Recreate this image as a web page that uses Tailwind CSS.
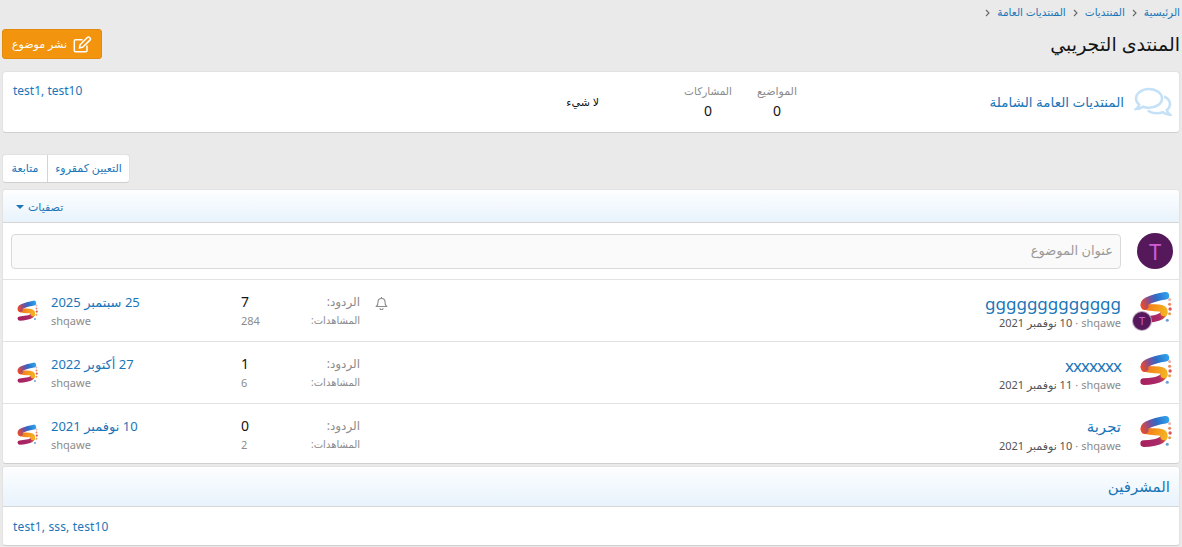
<!DOCTYPE html>
<html lang="ar" dir="rtl">
<head>
<meta charset="utf-8">
<script src="https://cdn.jsdelivr.net/npm/@tailwindcss/browser@4"></script>
</head>
<body class="bg-[#eaeaea] font-['Noto_Sans','DejaVu_Sans',sans-serif] overflow-hidden text-[#141414]">
<svg width="0" height="0" class="absolute">
  <defs>
    <linearGradient id="g1" gradientUnits="userSpaceOnUse" x1="3" y1="14" x2="31" y2="4"><stop offset="0" stop-color="#ee4b26"/><stop offset=".35" stop-color="#7a4f9a"/><stop offset=".6" stop-color="#2c6cc6"/><stop offset="1" stop-color="#2f9fe9"/></linearGradient>
    <linearGradient id="g2" gradientUnits="userSpaceOnUse" x1="4" y1="14" x2="29" y2="24"><stop offset="0" stop-color="#f0661e"/><stop offset=".6" stop-color="#f5981c"/><stop offset="1" stop-color="#f4b322"/></linearGradient>
    <linearGradient id="g3" gradientUnits="userSpaceOnUse" x1="3" y1="32" x2="30" y2="26"><stop offset="0" stop-color="#a81f5c"/><stop offset=".7" stop-color="#a92a6a"/><stop offset="1" stop-color="#e0572a"/></linearGradient>
    <symbol id="logo" viewBox="0 0 36 36">
      <path d="M27.500 23c-1 3.500-5 5-10 6-4.500 1-8 1.300-11.500 1.300" fill="none" stroke="url(#g3)" stroke-width="7" stroke-linecap="round"/>
      <path d="M7 15.500c2 2.500 9 2 15 2.500 4 .4 6 1.500 5.500 5" fill="none" stroke="url(#g2)" stroke-width="7.500" stroke-linecap="round"/>
      <path d="M29 5C22 6 15 8 10 10.500 7 12 6 14 7 16" fill="none" stroke="url(#g1)" stroke-width="8" stroke-linecap="round"/>
      <circle cx="33.500" cy="9" r="1.600" fill="#e6b4b4"/><circle cx="33.500" cy="14" r="1.600" fill="#e98a60"/><circle cx="34" cy="19" r="1.800" fill="#e25555"/><circle cx="33.500" cy="24" r="1.600" fill="#e9a050"/><circle cx="31" cy="31" r="1.600" fill="#6aa0d8"/>
    </symbol>
  </defs>
</svg>
<div class="h-[547px] px-[2px] flex flex-col">
  <!-- breadcrumb -->
  <nav class="h-[29px] pb-[3px] flex items-center w-full text-[10.5px] text-[#1a76b8] gap-[7px] tracking-[-.4px]">
    <span>الرئيسية</span>
    <svg width="5" height="8" viewBox="0 0 5 8" fill="none" stroke="#666" stroke-width="1.100"><path d="M1 1l3 3-3 3"/></svg>
    <span>المنتديات</span>
    <svg width="5" height="8" viewBox="0 0 5 8" fill="none" stroke="#666" stroke-width="1.100"><path d="M1 1l3 3-3 3"/></svg>
    <span>المنتديات العامة</span>
    <svg width="5" height="8" viewBox="0 0 5 8" fill="none" stroke="#666" stroke-width="1.100"><path d="M1 1l3 3-3 3"/></svg>
  </nav>
  <!-- title row -->
  <div class="h-[30px] flex items-center justify-between">
    <h1 class="text-[19px] leading-[30px] font-normal text-[#141414]">المنتدى التجريبي</h1>
    <button class="h-[30px] w-[100px] flex items-center justify-center gap-[6px] rounded-[3px] bg-[#f3940f] border border-[#e08a10] text-white text-[11px]">
      <svg width="19" height="17" viewBox="0 0 19 17" fill="none" stroke="white" stroke-width="1.500"><path d="M14 9.500v5a1.300 1.300 0 0 1-1.300 1.300H2.600A1.300 1.300 0 0 1 1.300 14.500V5A1.300 1.300 0 0 1 2.600 3.700h7"/><path d="M6.500 11.800l.6-3L14.600 1.300a1.200 1.200 0 0 1 1.700 0l.9.9a1.200 1.200 0 0 1 0 1.700L9.600 11.200z"/></svg>
      <span>نشر موضوع</span>
    </button>
  </div>
  <!-- forum card -->
  <section class="mt-[12px] h-[62px] bg-white rounded-[4px] border border-[#e2e2e2] border-b-[#cfcfcf] flex items-stretch">
    <div class="w-[369px] pr-[7px] flex items-center shrink-0 gap-[10px]">
      <svg width="38" height="30" viewBox="0 0 38 30" fill="none" stroke="#c5e1f7" stroke-width="2.600" class="shrink-0"><path d="M15 2C8 2 2 6 2 11.500c0 2.500 1.300 4.600 3.200 6.300-.4 1.700-1.500 3-3 4.200 2.700 0 5-1 6.800-2.300 1.900.7 4 1.100 6 1.100 7 0 13-4 13-9.300S22 2 15 2z"/><path d="M30 9.500c3.500 1.500 6 4.200 6 7.500 0 2.400-1.200 4.500-3.200 6.100.4 1.800 1.500 3.200 3.200 4.700-3 0-5.300-1-7.200-2.500-1.800.6-3.700 1-5.800 1-3.500 0-6.800-1-9.200-2.800"/></svg>
      <span class="text-[13.5px] tracking-[-.6px] text-[#1a76b8] whitespace-nowrap">المنتديات العامة الشاملة</span>
    </div>
    <div class="w-[66px] flex flex-col items-center pt-[11px] shrink-0"><span class="text-[11px] tracking-[-.4px] leading-[16px] text-[#8c8c8c]">المواضيع</span><span class="text-[14px] leading-[22px] mt-[1px]">0</span></div>
    <div class="w-[72px] flex flex-col items-center pt-[11px] shrink-0"><span class="text-[10.5px] tracking-[-.6px] leading-[16px] text-[#8c8c8c]">المشاركات</span><span class="text-[14px] leading-[22px] mt-[1px]">0</span></div>
    <div class="w-[100px] pr-[73px] box-content shrink-0 flex items-center text-[11px] text-[#111] whitespace-nowrap">لا شيء</div>
    <div class="flex-1 flex justify-end pl-[10px] pt-[10px] text-[12px] leading-[18px] text-[#1a76b8]"><span dir="ltr">test1, test10</span></div>
  </section>
  <!-- tabs -->
  <div class="mt-[21px] h-[29px] self-end w-[128px] flex bg-white rounded-[4px] border border-[#e2e2e2] border-b-[#cfcfcf] text-[11px] tracking-[-.4px] text-[#1a76b8]">
    <div class="w-[82px] flex items-center justify-center border-l border-[#d4d4d4]">التعيين كمقروء</div>
    <div class="flex-1 flex items-center justify-center">متابعة</div>
  </div>
  <!-- main block -->
  <section class="mt-[6px] h-[275px] bg-white rounded-[4px] border border-[#e2e2e2] border-b-[#cfcfcf] overflow-hidden flex flex-col">
    <div class="h-[33px] shrink-0 bg-gradient-to-b from-[#fdfeff] to-[#e8f3fc] border-b border-[#d6d6d6] flex items-center justify-end pl-[13px] pt-[2px] text-[11px] tracking-[-.2px] text-[#1a76b8]">
      <span class="flex items-center gap-[4px]"><span>تصفيات</span><span class="w-0 h-0 border-x-[4px] border-x-transparent border-t-[4px] border-t-[#1a76b8]"></span></span>
    </div>
    <div class="h-[57px] shrink-0 border-b border-[#e2e2e2] flex items-center pr-[6px] pl-[8px] gap-[16px]">
      <div class="w-[36px] h-[36px] rounded-full bg-[#55195b] text-[#cf5cd6] text-[22px] flex items-center justify-center shrink-0">T</div>
      <div class="flex-1 h-[35px] rounded-[4px] border border-[#d9d9d9] bg-[#fafafa] flex items-center pr-[7px] text-[13px] tracking-[-.3px] text-[#9a9a9a]">عنوان الموضوع</div>
    </div>
    <!-- row 1 -->
    <div class="h-[62px] shrink-0 border-b border-[#e2e2e2] flex items-center">
      <div class="w-[58px] h-full relative flex items-center justify-start pr-[7px] shrink-0">
        <svg width="34" height="34" class="-mt-[5px]"><use href="#logo"/></svg>
        <div class="absolute right-[27px] bottom-[10px] w-[20px] h-[20px] rounded-full bg-[#55195b] text-[#cf5cd6] text-[11px] flex items-center justify-center border border-white/60">T</div>
      </div>
      <div class="flex-1 flex flex-col items-start">
        <span class="text-[17px] leading-[23px] text-[#1a76b8]" dir="ltr">ggggggggggggg</span>
        <span class="text-[11px] leading-[15px] text-[#555] flex gap-[3px]"><span class="text-[#8c8c8c]">shqawe</span><span class="text-[#8c8c8c]">·</span><span>10 نوفمبر 2021</span></span>
      </div>
      <div class="w-[42px] flex justify-center shrink-0 -mt-[16px]">
        <svg width="13" height="14" viewBox="0 0 13 14" fill="none" stroke="#8a8a8a" stroke-width="1.100"><path d="M1.500 10.500c1-1 1.500-2 1.500-4.500a3.500 3.500 0 0 1 7 0c0 2.500.5 3.500 1.500 4.500z"/><path d="M5 12.300a1.500 1.500 0 0 0 3 0"/><path d="M6.500 1v1"/></svg>
      </div>
      <div class="w-[70px] shrink-0 flex flex-col items-start">
        <span class="text-[12px] leading-[20px] text-[#8c8c8c]">الردود:</span>
        <span class="text-[10px] tracking-[-.8px] leading-[17px] text-[#8c8c8c] whitespace-nowrap">المشاهدات:</span>
      </div>
      <div class="w-[49px] shrink-0 flex flex-col items-end">
        <span class="text-[14px] leading-[20px]">7</span><span class="text-[11px] leading-[17px] text-[#8c8c8c]">284</span>
      </div>
      <div class="w-[238px] shrink-0 flex items-center pl-[13px] gap-[13px]" dir="ltr">
        <svg width="22" height="24" viewBox="0 0 36 36" class="shrink-0"><use href="#logo"/></svg>
        <div class="flex flex-col items-start">
          <span class="text-[13px] leading-[20px] text-[#1a76b8]" dir="rtl">25 <span class="tracking-[-.5px]">سبتمبر</span> 2025</span>
          <span class="text-[11px] leading-[17px] text-[#8c8c8c]">shqawe</span>
        </div>
      </div>
    </div>
    <!-- row 2 -->
    <div class="h-[62px] shrink-0 border-b border-[#e2e2e2] flex items-center">
      <div class="w-[58px] h-full relative flex items-center justify-start pr-[7px] shrink-0">
        <svg width="34" height="34" class="-mt-[5px]"><use href="#logo"/></svg>
      </div>
      <div class="flex-1 flex flex-col items-start">
        <span class="text-[17px] leading-[23px] tracking-[-1px] text-[#1a76b8]" dir="ltr">xxxxxxx</span>
        <span class="text-[11px] leading-[15px] text-[#555] flex gap-[3px]"><span class="text-[#8c8c8c]">shqawe</span><span class="text-[#8c8c8c]">·</span><span>11 نوفمبر 2021</span></span>
      </div>
      <div class="w-[42px] shrink-0"></div>
      <div class="w-[70px] shrink-0 flex flex-col items-start">
        <span class="text-[12px] leading-[20px] text-[#8c8c8c]">الردود:</span>
        <span class="text-[10px] tracking-[-.8px] leading-[17px] text-[#8c8c8c] whitespace-nowrap">المشاهدات:</span>
      </div>
      <div class="w-[49px] shrink-0 flex flex-col items-end">
        <span class="text-[14px] leading-[20px]">1</span><span class="text-[11px] leading-[17px] text-[#8c8c8c]">6</span>
      </div>
      <div class="w-[238px] shrink-0 flex items-center pl-[13px] gap-[13px]" dir="ltr">
        <svg width="22" height="24" viewBox="0 0 36 36" class="shrink-0"><use href="#logo"/></svg>
        <div class="flex flex-col items-start">
          <span class="text-[13px] leading-[20px] text-[#1a76b8]" dir="rtl">27 <span class="tracking-[-.5px]">أكتوبر</span> 2022</span>
          <span class="text-[11px] leading-[17px] text-[#8c8c8c]">shqawe</span>
        </div>
      </div>
    </div>
    <!-- row 3 -->
    <div class="h-[59px] shrink-0 flex items-center">
      <div class="w-[58px] h-full relative flex items-center justify-start pr-[7px] shrink-0">
        <svg width="34" height="34" class="-mt-[3px]"><use href="#logo"/></svg>
      </div>
      <div class="flex-1 flex flex-col items-start">
        <span class="text-[15px] leading-[23px] tracking-[-.3px] text-[#1a76b8]">تجربة</span>
        <span class="text-[11px] leading-[15px] text-[#555] flex gap-[3px]"><span class="text-[#8c8c8c]">shqawe</span><span class="text-[#8c8c8c]">·</span><span>10 نوفمبر 2021</span></span>
      </div>
      <div class="w-[42px] shrink-0"></div>
      <div class="w-[70px] shrink-0 flex flex-col items-start pt-[2px]">
        <span class="text-[12px] leading-[20px] text-[#8c8c8c]">الردود:</span>
        <span class="text-[10px] tracking-[-.8px] leading-[17px] text-[#8c8c8c] whitespace-nowrap">المشاهدات:</span>
      </div>
      <div class="w-[49px] shrink-0 flex flex-col items-end pt-[2px]">
        <span class="text-[14px] leading-[20px]">0</span><span class="text-[11px] leading-[17px] text-[#8c8c8c]">2</span>
      </div>
      <div class="w-[238px] shrink-0 flex items-center pl-[13px] gap-[13px] pt-[2px]" dir="ltr">
        <svg width="22" height="24" viewBox="0 0 36 36" class="shrink-0"><use href="#logo"/></svg>
        <div class="flex flex-col items-start">
          <span class="text-[13px] leading-[20px] text-[#1a76b8]" dir="rtl">10 <span class="tracking-[-.5px]">نوفمبر</span> 2021</span>
          <span class="text-[11px] leading-[17px] text-[#8c8c8c]">shqawe</span>
        </div>
      </div>
    </div>
  </section>
  <!-- moderators -->
  <section class="mt-[2px] h-[80px] bg-white rounded-[4px] border border-[#e2e2e2] border-b-[#cfcfcf] overflow-hidden flex flex-col">
    <div class="h-[40px] shrink-0 bg-gradient-to-b from-[#fdfeff] to-[#e8f3fc] border-b border-[#d6d6d6] flex items-center pr-[9px] text-[15px] tracking-[-.4px] text-[#1a76b8]">المشرفين</div>
    <div class="flex-1 flex items-center justify-end pl-[10px] pt-[2px] text-[12px] tracking-[.15px] text-[#1a76b8]"><span dir="ltr">test1, sss, test10</span></div>
  </section>
</div>
</body>
</html>
